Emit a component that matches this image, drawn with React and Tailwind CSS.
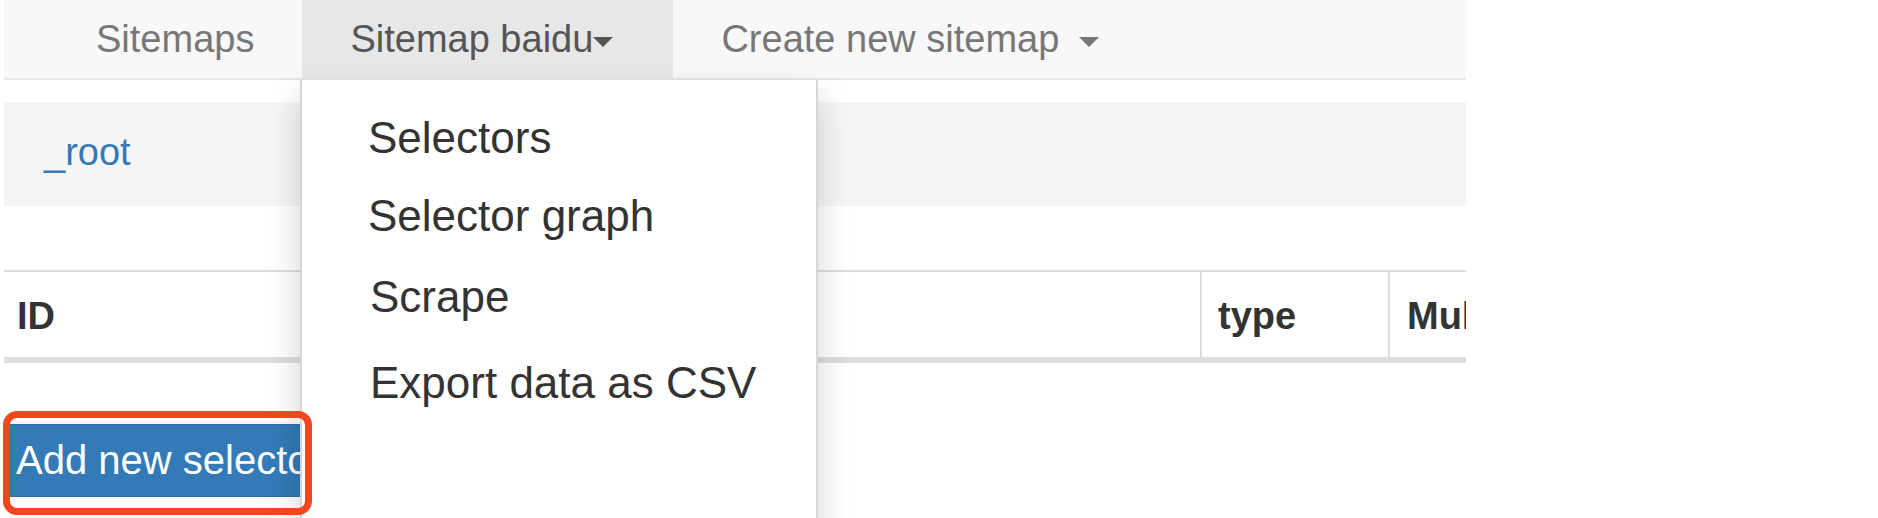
export default function App() {
  const caret = (color) => (
    <span
      className="inline-block w-0 h-0 border-l-[10px] border-r-[10px] border-t-[10px] border-l-transparent border-r-transparent mt-[6px]"
      style={{ borderTopColor: color }}
    />
  );
  return (
    <div className="relative w-[1878px] h-[518px] overflow-hidden bg-white font-['Liberation_Sans',Arial,sans-serif]">
      <div className="ml-[4px] w-[1462px] overflow-hidden">
        {/* Navbar */}
        <nav className="h-[80px] bg-[#f8f8f8] border-b-2 border-[#e7e7e7] flex pl-[44px] text-[38px] text-[#777]">
          <div className="px-[48px] leading-[78px]">Sitemaps</div>
          <div className="bg-[#e7e7e7] pl-[48px] w-[371px] leading-[78px] text-[#555] flex items-center">
            <span>Sitemap baidu</span>
            {caret("#555")}
          </div>
          <div className="px-[48px] leading-[78px] flex items-center">
            <span>Create new sitemap</span>
            <span className="ml-[20px] flex">{caret("#777")}</span>
          </div>
        </nav>

        {/* Breadcrumb */}
        <div className="mt-[22px] h-[104px] bg-[#f5f5f5] pl-[40px] text-[38px] leading-[100px] text-[#337ab7]">
          _root
        </div>

        {/* Table header */}
        <div className="mt-[64px] border-t-2 border-b-[6px] border-[#dddddd] flex text-[38px] font-bold text-[#333]">
          <div className="shrink-0 w-[1196px] h-[85px] pt-[4px] leading-[81px] pl-[13px]">ID</div>
          <div className="shrink-0 w-[188px] h-[85px] pt-[4px] leading-[81px] pl-[16px] border-l-2 border-[#dddddd]">type</div>
          <div className="shrink-0 w-[200px] h-[85px] pt-[4px] leading-[81px] pl-[17px] border-l-2 border-[#dddddd] whitespace-nowrap">Multiple</div>
        </div>

        {/* Button */}
        <div className="mt-[61px] ml-[6px] w-[380px] h-[73px] bg-[#337ab7] border border-[#2e6da4] pl-[5px] text-[40px] leading-[71px] text-white whitespace-nowrap">
          Add new selector
        </div>
      </div>

      {/* Dropdown menu */}
      <div className="absolute left-[300px] top-[80px] w-[518px] h-[460px] bg-white border-x-2 border-[#d6d6d6] shadow-[0_16px_32px_rgba(0,0,0,0.175)] pt-[20px] pl-[66px] text-[44px] text-[#333]">
        <div className="leading-[76px]">Selectors</div>
        <div className="leading-[80px]">Selector graph</div>
        <div className="leading-[82px] pl-[2px]">Scrape</div>
        <div className="leading-[90px] pl-[2px]">Export data as CSV</div>
      </div>

      {/* Annotation outline */}
      <div className="absolute left-[3px] top-[411px] w-[309px] h-[104px] border-[7px] border-[#f3461f] rounded-[14px]" />
    </div>
  );
}
